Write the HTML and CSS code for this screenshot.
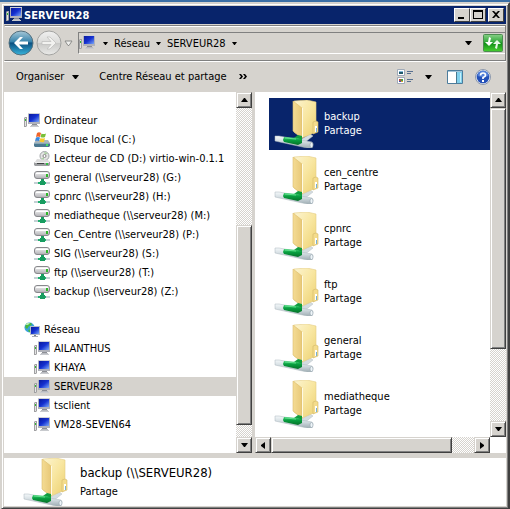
FILE: index.html
```html
<!DOCTYPE html>
<html lang="fr">
<head>
    <meta charset="UTF-8">
    <meta name="viewport" content="width=device-width, initial-scale=1.0">
    <title>SERVEUR28</title>
    <link rel="stylesheet" href="styles.css">
</head>
<body>
    <!-- Shared icons -->
    <svg class="sprite" aria-hidden="true">
        <defs>
            <linearGradient id="screen" x1="0" y1="0" x2="1" y2="1">
                <stop offset="0" stop-color="#0a1a9c"/>
                <stop offset=".5" stop-color="#1430d0"/>
                <stop offset="1" stop-color="#7aa8f8"/>
            </linearGradient>
            <linearGradient id="metal" x1="0" y1="0" x2="0" y2="1">
                <stop offset="0" stop-color="#f8f8f8"/>
                <stop offset="1" stop-color="#b0b0b4"/>
            </linearGradient>
            <linearGradient id="fold-left" x1="0" y1="0" x2="1" y2="0">
                <stop offset="0" stop-color="#f4dc94"/>
                <stop offset="1" stop-color="#e8c878"/>
            </linearGradient>
            <linearGradient id="fold-right" x1="0" y1="0" x2="1" y2="1">
                <stop offset="0" stop-color="#fcf4d0"/>
                <stop offset=".5" stop-color="#f8e6a0"/>
                <stop offset="1" stop-color="#ecd070"/>
            </linearGradient>
            <linearGradient id="pipe" x1="0" y1="0" x2="0" y2="1">
                <stop offset="0" stop-color="#f4f8fa"/>
                <stop offset=".5" stop-color="#d0dadf"/>
                <stop offset="1" stop-color="#a0aeb4"/>
            </linearGradient>
            <linearGradient id="sleeve" x1="0" y1="0" x2="0" y2="1">
                <stop offset="0" stop-color="#48d078"/>
                <stop offset=".4" stop-color="#08a040"/>
                <stop offset="1" stop-color="#067028"/>
            </linearGradient>
            <linearGradient id="back-top" x1="0" y1="0" x2="0" y2="1">
                <stop offset="0" stop-color="#a8c8d8"/>
                <stop offset=".45" stop-color="#3884ac"/>
                <stop offset=".5" stop-color="#0c5080"/>
                <stop offset="1" stop-color="#38b4dc"/>
            </linearGradient>
            <linearGradient id="forward-top" x1="0" y1="0" x2="0" y2="1">
                <stop offset="0" stop-color="#f0f0f0"/>
                <stop offset=".48" stop-color="#dcdcda"/>
                <stop offset=".52" stop-color="#cacac8"/>
                <stop offset="1" stop-color="#eaeae8"/>
            </linearGradient>
            <linearGradient id="refresh-bg" x1="0" y1="0" x2="0" y2="1">
                <stop offset="0" stop-color="#88d088"/>
                <stop offset=".45" stop-color="#30a838"/>
                <stop offset=".5" stop-color="#108c18"/>
                <stop offset="1" stop-color="#48d030"/>
            </linearGradient>
        </defs>
        <symbol id="computer" viewBox="0 0 16 16">
            <path d="M0 5l1-1h2v9l-1 1H0z" fill="#a0a0a2"/>
            <path d="M1 5h1v8H1z" fill="#e4e4e4"/>
            <path d="M1 6h1v2H1z" fill="#34b834"/>
            <path d="M4 0h12v11H4z" fill="#b0b2ba"/>
            <path d="M4 0h12v1H4z" fill="#d0d2d8"/>
            <path d="M5 1h10v8H5z" fill="url(#screen)"/>
            <path d="M8 11h5v1H8z" fill="#8c8e94"/>
            <path d="M7 12h7v1H7z" fill="#b8bac0"/>
            <path d="M6 13h9v1H6z" fill="#c8cace"/>
        </symbol>
        <symbol id="disk" viewBox="0 0 16 16">
            <path d="M2 8h12l2 3H0z" fill="#a8b4bc"/>
            <path d="M0 11h16v3l-1 1H1l-1-1z" fill="#4c7890"/>
            <path d="M0 11h16v1H0z" fill="#88a8b8"/>
            <path d="M12 12h2v2h-2z" fill="#40e060"/>
            <path d="M3 1q2-1.500 4 0L6 5Q4 4 2 5z" fill="#f06428"/>
            <path d="M7.500 1.500q2 1 4.500 0L11 5Q9 6 6.500 5z" fill="#78c038"/>
            <path d="M2 5.500q2-1 4 0L5 9Q3 8 1 9z" fill="#3888e0"/>
            <path d="M6.500 6q2 1 4.500 0l-1 4Q8 10.500 5.500 9.500z" fill="#f8c828"/>
        </symbol>
        <symbol id="cdrom" viewBox="0 0 16 16">
            <circle cx="10.500" cy="5" r="4.500" fill="#e4e4e4" stroke="#a0a4a8"/>
            <path d="M10 1l1 3 3-2zM10 6l-3 2 3 1z" fill="#a8d0a0"/>
            <circle cx="10.500" cy="5" r="1.500" fill="#fff" stroke="#888"/>
            <path d="M3 8l11 1 2 2H1z" fill="#dcdcdc"/>
            <path d="M1 11h15v3l-1 1H1l-1-1v-2z" fill="#9c9ea0"/>
            <path d="M1 11h14v1H1z" fill="#f0f0f0"/>
            <path d="M3 12h7v1H3z" fill="#404244"/>
            <path d="M12 12h2v2h-2z" fill="#30c040"/>
        </symbol>
        <symbol id="netdrive" viewBox="0 0 16 16">
            <rect x=".5" y="1.500" width="15" height="7" rx="2.500" fill="url(#metal)" stroke="#88888c"/>
            <path d="M2 3h12v1H2z" fill="#fff"/>
            <path d="M12 4h2v3h-2z" fill="#30b828"/>
            <path d="M7 9h3v3H7z" fill="#189c60"/>
            <path d="M0 12h16v2H0z" fill="#c4d0d4"/>
            <path d="M4 12h8v2H4z" fill="#20b070"/>
            <path d="M6 11h5v4H6z" fill="#189c60"/>
        </symbol>
        <symbol id="network" viewBox="0 0 16 16">
            <circle cx="5.500" cy="5.500" r="5" fill="#38a0dc"/>
            <path d="M3 1l4 0 1 2-3 1-2 3-2-2zM4 8l3-1 1 3-3 0z" fill="#48b83c"/>
            <path d="M1 3l2-2 3 0-2 2z" fill="#b4e8b0"/>
            <path d="M6 4h10v9H6z" fill="#b4bcc8"/>
            <path d="M7 5h8v7H7z" fill="url(#screen)"/>
            <path d="M10 13h2v1h-2z" fill="#787c88"/>
            <path d="M8 14h6v1H8z" fill="#a8acb4"/>
        </symbol>
        <symbol id="share" viewBox="0 0 48 48">
            <path d="M26 40l10-6 3 2-9 7z" fill="#d4dce0" stroke="#b4bec4" stroke-width=".5"/>
            <path d="M20 1l13-1 9 2v30l-14 6-8-6z" fill="url(#fold-right)" stroke="#e4cc84" stroke-width=".6"/>
            <path d="M39 22l3-1 2 1v10l-5 2z" fill="#f4dc8c" stroke="#d4b868" stroke-width=".6"/>
            <path d="M41 26h2v6h-2z" fill="#fff"/>
            <path d="M42 28h1v4h-1z" fill="#78b0d4"/>
            <path d="M19 1l9 7 0 30-9-7z" fill="url(#fold-left)" stroke="#dcbc6c" stroke-width=".6"/>
            <path d="M28.500 8v29" stroke="#fffae4" stroke-width="1"/>
            <path d="M1 36l4 0 33 6 1 2-1 4-5 0L1 41z" fill="url(#pipe)" stroke="#aab6bc" stroke-width=".5"/>
            <ellipse cx="37.500" cy="45" rx="1.500" ry="2.500" fill="#eef4f8" stroke="#94a2ac" stroke-width=".6"/>
            <path d="M20 38l4-3 4 1 0 6-5 1z" fill="#109c40"/>
            <path d="M10 37l14 1 4 2 0 3-4 2-14-3-1-2z" fill="url(#sleeve)"/>
            <path d="M11 38l11 1" stroke="#60e08c" stroke-width="1"/>
        </symbol>
        <symbol id="down" viewBox="0 0 7 4">
            <path d="M0 0h7L4 4H3z" fill="currentColor"/>
        </symbol>
        <symbol id="left" viewBox="0 0 4 7">
            <path d="M4 0v7L0 4V3z" fill="currentColor"/>
        </symbol>
    </svg>

    <div class="window">
        <header class="title-bar">
            <svg class="icon"><use href="#computer"/></svg>
            <h1>SERVEUR28</h1>
            <div class="window-buttons">
                <button class="caption" aria-label="Réduire"><svg viewBox="0 0 12 10"><path d="M2 7h6v2H2z"/></svg></button>
                <button class="caption" aria-label="Agrandir"><svg viewBox="0 0 12 10"><path d="M1 0h10v9H1zM2 2v6h8V2z" fill-rule="evenodd"/></svg></button>
                <button class="caption close" aria-label="Fermer"><svg viewBox="0 0 12 10"><path d="M2 1h2l2 2 2-2h2L7 4.500 10 8H8L6 6 4 8H2l3-3.500z"/></svg></button>
            </div>
        </header>

        <nav class="nav-bar">
            <div class="history">
                <button aria-label="Précédent"><svg class="round" viewBox="0 0 26 26">
                    <circle cx="13" cy="13" r="12" fill="url(#back-top)" stroke="#54707e"/>
                    <path d="M6 13l6-6h3l-4 4.500h9v3h-9l4 4.500h-3z" fill="#fff"/>
                </svg></button>
                <button aria-label="Suivant"><svg class="round" viewBox="0 0 26 26">
                    <circle cx="13" cy="13" r="12" fill="url(#forward-top)" stroke="#a4a4a2"/>
                    <path d="M20 13l-6-6h-3l4 4.500H6v3h9l-4 4.500h3z" fill="#f2f2f0" stroke="#bcbcba" stroke-width=".7"/>
                </svg></button>
                <button aria-label="Pages récentes"><svg class="recent" viewBox="0 0 9 7"><path d="M1 1h7L5 5.500H4z" fill="#f0f0ee" stroke="#8c8c8a"/></svg></button>
            </div>
            <div class="address">
                <svg class="icon"><use href="#computer"/></svg>
                <button aria-label="Emplacements"><svg class="arrow small"><use href="#down"/></svg></button>
                <button>Réseau</button>
                <button aria-label="Contenu de Réseau"><svg class="arrow small"><use href="#down"/></svg></button>
                <button>SERVEUR28</button>
                <button aria-label="Contenu de SERVEUR28"><svg class="arrow small"><use href="#down"/></svg></button>
                <button class="previous" aria-label="Emplacements précédents"><svg class="arrow"><use href="#down"/></svg></button>
                <button class="refresh" aria-label="Actualiser"><svg viewBox="0 0 20 18">
                    <rect x=".5" y=".5" width="19" height="17" rx="1" fill="url(#refresh-bg)" stroke="#4c8c50"/>
                    <path d="M6 3l2 1-1 4h3l-4 4-4-4h3z" fill="#fff"/>
                    <path d="M14 15l-2-1 1-4h-3l4-4 4 4h-3z" fill="#e8f8e8"/>
                </svg></button>
            </div>
        </nav>

        <div class="toolbar">
            <button class="organize">Organiser <svg class="arrow"><use href="#down"/></svg></button>
            <button>Centre Réseau et partage</button>
            <button class="more" aria-label="Plus"><svg viewBox="0 0 9 7"><path d="M0 1h2l2 2.500L2 6H0l2-2.500zM4 1h2l2 2.500L6 6H4l2-2.500z"/></svg></button>
            <div class="toolbar-right">
                <button aria-label="Changer l'affichage"><svg class="icon" viewBox="0 0 16 16">
                    <path d="M.5.500h7v6h-7zM.5 8.500h7v6h-7z" fill="#fff" stroke="#a0aab8"/>
                    <path d="M2 2h4v1H2z" fill="#80b8dc"/>
                    <path d="M2 3h4v2H2z" fill="#205868"/>
                    <path d="M2 10h2v2H2z" fill="#c04838"/>
                    <path d="M4 10h2v2H4z" fill="#48a040"/>
                    <path d="M2 12h2v1H2z" fill="#3848b8"/>
                    <path d="M4 12h2v1H4z" fill="#e0a030"/>
                    <path d="M10 2h6v1h-6zM10 4h4v1h-4zM10 10h6v1h-6zM10 12h4v1h-4z" fill="#587090"/>
                </svg></button>
                <button aria-label="Autres affichages"><svg class="arrow"><use href="#down"/></svg></button>
                <button class="preview" aria-label="Volet de visualisation"><svg class="icon" viewBox="0 0 16 16">
                    <path d="M.5 1.500h15v13H.5z" fill="#fff" stroke="#4c7c9c"/>
                    <path d="M1 2h14v1H1z" fill="#a4c4d8"/>
                    <path d="M10 3h5v11h-5z" fill="#80d0ec"/>
                    <path d="M9 3h1v11H9z" fill="#487890"/>
                    <path d="M13 4h1v9h-1z" fill="#c4f0fc"/>
                </svg></button>
                <button aria-label="Aide"><svg class="icon" viewBox="0 0 16 16">
                    <circle cx="8" cy="8" r="7.500" fill="#e4e8f0" stroke="#8c98ac"/>
                    <circle cx="8" cy="8" r="6.300" fill="#2450b8"/>
                    <path d="M2.500 7a5.500 5.500 0 0 1 11 0q-5 2-11 0z" fill="#5480d8"/>
                    <path d="M5.500 6.500Q5.500 4 8 4t2.500 2.200Q10.500 7.500 8 8.500V10" fill="none" stroke="#fff" stroke-width="1.700"/>
                    <path d="M7 11h2v2H7z" fill="#fff"/>
                </svg></button>
            </div>
        </div>

        <main class="content">
            <aside class="tree-pane">
                <div class="tree">
                    <a href="#"><svg class="icon"><use href="#computer"/></svg>Ordinateur</a>
                    <div class="branch">
                        <a href="#"><svg class="icon"><use href="#disk"/></svg>Disque local (C:)</a>
                        <a href="#"><svg class="icon"><use href="#cdrom"/></svg>Lecteur de CD (D:) virtio-win-0.1.1</a>
                        <a href="#"><svg class="icon"><use href="#netdrive"/></svg>general (\\serveur28) (G:)</a>
                        <a href="#"><svg class="icon"><use href="#netdrive"/></svg>cpnrc (\\serveur28) (H:)</a>
                        <a href="#"><svg class="icon"><use href="#netdrive"/></svg>mediatheque (\\serveur28) (M:)</a>
                        <a href="#"><svg class="icon"><use href="#netdrive"/></svg>Cen_Centre (\\serveur28) (P:)</a>
                        <a href="#"><svg class="icon"><use href="#netdrive"/></svg>SIG (\\serveur28) (S:)</a>
                        <a href="#"><svg class="icon"><use href="#netdrive"/></svg>ftp (\\serveur28) (T:)</a>
                        <a href="#"><svg class="icon"><use href="#netdrive"/></svg>backup (\\serveur28) (Z:)</a>
                    </div>
                    <a href="#"><svg class="icon"><use href="#network"/></svg>Réseau</a>
                    <div class="branch">
                        <a href="#"><svg class="icon"><use href="#computer"/></svg>AILANTHUS</a>
                        <a href="#"><svg class="icon"><use href="#computer"/></svg>KHAYA</a>
                        <a href="#" class="current"><svg class="icon"><use href="#computer"/></svg>SERVEUR28</a>
                        <a href="#"><svg class="icon"><use href="#computer"/></svg>tsclient</a>
                        <a href="#"><svg class="icon"><use href="#computer"/></svg>VM28-SEVEN64</a>
                    </div>
                </div>
                <div class="scrollbar tree-scroll">
                    <button aria-label="Monter"><svg class="arrow up"><use href="#down"/></svg></button>
                    <div class="track"><div class="thumb"></div></div>
                    <button aria-label="Descendre"><svg class="arrow"><use href="#down"/></svg></button>
                </div>
            </aside>

            <section class="files-pane">
                <div class="files">
                    <a href="#" class="file selected"><svg class="folder"><use href="#share"/></svg><span>backup<br>Partage</span></a>
                    <a href="#" class="file"><svg class="folder"><use href="#share"/></svg><span>cen_centre<br>Partage</span></a>
                    <a href="#" class="file"><svg class="folder"><use href="#share"/></svg><span>cpnrc<br>Partage</span></a>
                    <a href="#" class="file"><svg class="folder"><use href="#share"/></svg><span>ftp<br>Partage</span></a>
                    <a href="#" class="file"><svg class="folder"><use href="#share"/></svg><span>general<br>Partage</span></a>
                    <a href="#" class="file"><svg class="folder"><use href="#share"/></svg><span>mediatheque<br>Partage</span></a>
                </div>
                <div class="scrollbar files-scroll">
                    <button aria-label="Monter"><svg class="arrow up"><use href="#down"/></svg></button>
                    <div class="track"><div class="thumb"></div></div>
                    <button aria-label="Descendre"><svg class="arrow"><use href="#down"/></svg></button>
                </div>
                <div class="scrollbar horizontal">
                    <button aria-label="Gauche"><svg class="arrow side"><use href="#left"/></svg></button>
                    <div class="track"><div class="thumb"></div></div>
                    <button aria-label="Droite"><svg class="arrow side right"><use href="#left"/></svg></button>
                </div>
            </section>
        </main>

        <footer class="details">
            <svg class="folder"><use href="#share"/></svg>
            <div>
                <h2>backup (\\SERVEUR28)</h2>
                <p>Partage</p>
            </div>
        </footer>
    </div>
</body>
</html>
```
FILE: styles.css
```css
* {
    box-sizing: border-box;
}

body {
    margin: 0;
    padding-top: 2px;
    min-height: 100vh;
    display: flex;
    flex-direction: column;
    background-color: #3a6ea5;
    font-family: Tahoma, 'DejaVu Sans Condensed', 'DejaVu Sans', sans-serif;
    font-size: 11px;
    color: #000;
}

h1, h2, p {
    margin: 0;
}

button {
    padding: 0;
    border: none;
    background: none;
    font: inherit;
    color: inherit;
    white-space: nowrap;
}

a {
    color: inherit;
    text-decoration: none;
}

svg {
    display: block;
    flex: none;
}

.sprite {
    position: absolute;
    width: 0;
    height: 0;
}

.icon {
    width: 16px;
    height: 16px;
}

.folder {
    width: 48px;
    height: 48px;
}

.arrow {
    width: 7px;
    height: 4px;
}

.arrow.small {
    width: 5px;
    height: 3px;
}

.arrow.up {
    transform: rotate(180deg);
}

.arrow.side {
    width: 4px;
    height: 7px;
}

.arrow.right {
    transform: rotate(180deg);
}

.window {
    flex: 1;
    display: flex;
    flex-direction: column;
    padding: 2px;
    background-color: #d6d3ce;
    border: 2px solid;
    border-color: #d6d3ce #404040 #404040 #d6d3ce;
    box-shadow: inset 1px 1px #fff, inset -1px -1px #808080;
}

/* Title bar */
.title-bar {
    display: flex;
    align-items: center;
    height: 18px;
    padding: 0 2px;
    background-color: #08246b;
    color: #fff;
}

.title-bar h1 {
    margin-left: 2px;
    font-size: 11px;
}

.window-buttons {
    display: flex;
    margin-left: auto;
}

.caption {
    display: flex;
    align-items: center;
    justify-content: center;
    width: 16px;
    height: 14px;
    background-color: #d6d3ce;
    border: 1px solid;
    border-color: #fff #404040 #404040 #fff;
    color: #000;
}

.caption svg {
    width: 12px;
    height: 10px;
}

.close {
    margin-left: 2px;
}

/* Navigation */
.nav-bar {
    display: flex;
    align-items: center;
    height: 36px;
    margin-top: 1px;
    padding-left: 3px;
    border: 1px solid #808080;
    border-left-color: #d6d3ce;
    box-shadow: inset 0 1px #fff, 0 1px #fff;
}

.history {
    display: flex;
    align-items: center;
    gap: 2px;
}

.round {
    width: 26px;
    height: 26px;
}

.recent {
    width: 9px;
    height: 7px;
}

.address {
    flex: 1;
    display: flex;
    align-items: center;
    gap: 6px;
    height: 22px;
    margin-left: 5px;
    padding-right: 2px;
    border-top: 1px solid #808080;
    border-left: 1px solid #808080;
    border-bottom: 1px solid #fff;
}

.address .icon {
    margin-right: 2px;
}

.previous {
    margin-left: auto;
}

.refresh {
    margin-left: 5px;
}

.refresh svg {
    width: 20px;
    height: 18px;
}

/* Toolbar */
.toolbar {
    display: flex;
    align-items: center;
    height: 31px;
    padding: 0 15px 0 12px;
}

.organize {
    display: flex;
    align-items: center;
    gap: 8px;
    margin-right: 20px;
}

.more {
    margin-left: 12px;
}

.more svg {
    width: 9px;
    height: 7px;
}

.toolbar-right {
    display: flex;
    align-items: center;
    gap: 12px;
    margin-left: auto;
}

.preview {
    margin-left: 3px;
}

/* Panes */
.content {
    flex: 1;
    display: grid;
    grid-template-columns: 248fr 251fr;
    gap: 3px;
}

.tree-pane {
    display: flex;
    background-color: #fff;
}

.tree {
    flex: 1;
    padding: 19px 0;
}

.tree a {
    display: flex;
    align-items: center;
    gap: 4px;
    height: 19px;
    padding-left: 20px;
    white-space: nowrap;
}

.tree .branch a {
    padding-left: 30px;
}

.tree .branch + a {
    margin-top: 19px;
}

.tree .current {
    background-color: #d6d3ce;
}

.files-pane {
    display: grid;
    grid-template-columns: 1fr 16px;
    grid-template-rows: 1fr 16px;
    background-color: #fff;
}

.files {
    display: flex;
    flex-direction: column;
    gap: 4px;
    padding: 6px 0 0 14px;
}

.file {
    display: flex;
    align-items: center;
    gap: 2px;
    height: 52px;
    padding-left: 5px;
    line-height: 14px;
}

.selected {
    background-color: #08246b;
    color: #fff;
}

/* Scrollbars */
.scrollbar {
    display: flex;
    flex-direction: column;
    width: 16px;
}

.scrollbar button {
    display: flex;
    align-items: center;
    justify-content: center;
    width: 16px;
    height: 16px;
}

.scrollbar button,
.thumb {
    background-color: #d6d3ce;
    border: 1px solid;
    border-color: #d6d3ce #404040 #404040 #d6d3ce;
    box-shadow: inset 1px 1px #fff, inset -1px -1px #808080;
}

.track {
    flex: 1;
    display: flex;
    flex-direction: column;
    background: repeating-conic-gradient(#d6d3ce 0 25%, #fff 0 50%) 0 0 / 2px 2px;
}

.tree-scroll .track::before {
    content: "";
    flex: 117;
}

.tree-scroll .thumb {
    flex: 199;
}

.tree-scroll .track::after {
    content: "";
    flex: 12;
}

.files-scroll .thumb {
    height: 77%;
}

.horizontal {
    flex-direction: row;
    width: auto;
}

.horizontal .thumb {
    width: 89%;
    height: 16px;
}

/* Details */
.details {
    display: flex;
    align-items: center;
    gap: 9px;
    height: 48px;
    margin-top: 5px;
    padding-left: 19px;
    background-color: #fff;
}

.details h2 {
    font-size: 13px;
    font-weight: normal;
    line-height: 20px;
}

.details p {
    line-height: 18px;
}
```
